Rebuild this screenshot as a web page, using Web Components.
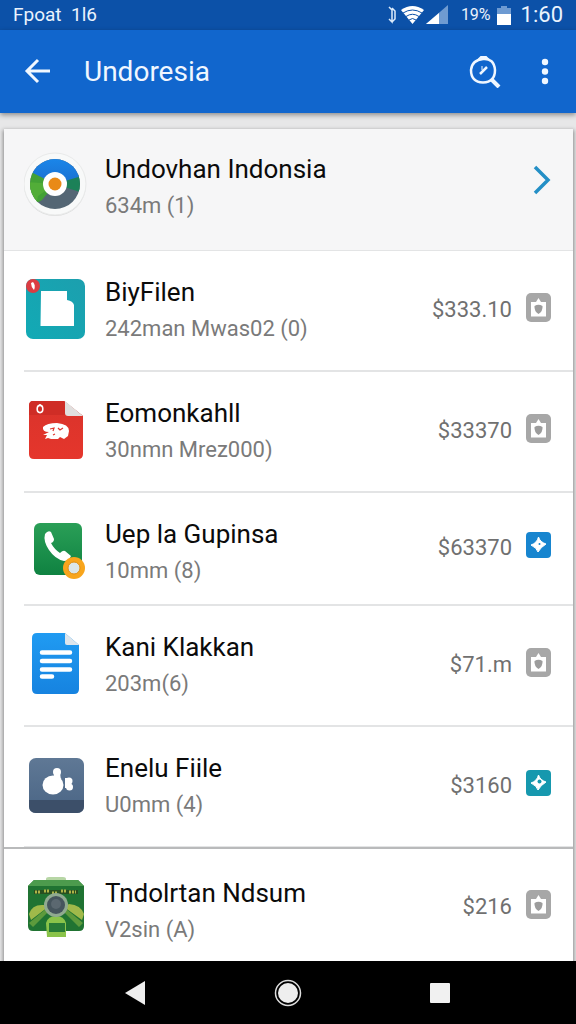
<!DOCTYPE html>
<html lang="id">
<head>
<meta charset="utf-8">
<meta name="viewport" content="width=device-width, initial-scale=1">
<title>Undoresia</title>
<style>
  body {
    margin: 0;
    font-family: Roboto, "Liberation Sans", sans-serif;
    --bar: #1166cd;
    --bar-dark: #0c51a8;
    --text-1: #0b0b0b;
    --text-2: #7a7a7a;
    --line: #e3e4e5;
  }
</style>
</head>
<body>

<phone-screen>
  <status-bar slot="top" carrier="Fpoat  1l6" battery="19%" time="1:60"></status-bar>
  <app-bar slot="top">Undoresia</app-bar>

  <file-row lead icon="ring" sub="634m (1)">Undovhan Indonsia</file-row>
  <file-row icon="folder" sub="242man Mwas02 (0)" price="$333.10" badge="bag">BiyFilen</file-row>
  <file-row icon="pdf" sub="30nmn Mrez000)" price="$33370" badge="bag">Eomonkahll</file-row>
  <file-row short icon="phone" sub="10mm (8)" price="$63370" badge="star">Uep la Gupinsa</file-row>
  <file-row icon="doc" sub="203m(6)" price="$71.m" badge="bag">Kani Klakkan</file-row>
  <file-row icon="thumb" sub="U0mm (4)" price="$3160" badge="star-teal">Enelu Fiile</file-row>
  <file-row split icon="camera" sub="V2sin (A)" price="$216" badge="bag">Tndolrtan Ndsum</file-row>

  <nav-bar slot="bottom"></nav-bar>
</phone-screen>

<script>
const APP_ICONS = {
  ring: `
    <defs>
      <clipPath id="c"><circle cx="31" cy="32" r="25"/></clipPath>
      <linearGradient id="b" x1="0" y1="0" x2="0" y2="1"><stop offset="0" stop-color="#1a8cf0"/><stop offset="1" stop-color="#1b6fd0"/></linearGradient>
    </defs>
    <circle cx="31" cy="33" r="31" fill="#dcdddd"/>
    <circle cx="31" cy="32" r="31" fill="#f8f9f9" stroke="#e9eaea"/>
    <g clip-path="url(#c)">
      <rect width="64" height="64" fill="#546674"/>
      <path d="M31 32L0 14V58L18 48Z" fill="#43a136"/>
      <path d="M31 32L14 44L12 54L2 46V30Z" fill="#52ad38"/>
      <path d="M31 32L62 20V42Z" fill="#1c8158"/>
      <path d="M31 32L7 20L20 0H50L58 24Z" fill="url(#b)"/>
    </g>
    <circle cx="31" cy="32" r="12" fill="#fff"/>
    <circle cx="31" cy="32" r="6.500" fill="#e98a17"/>`,
  folder: `
    <defs><linearGradient id="g" x1="1" y1="0" x2="0" y2="1"><stop offset="0" stop-color="#1c9fae"/><stop offset="1" stop-color="#12aab5"/></linearGradient></defs>
    <rect x="2" y="2" width="59" height="60" rx="7" fill="url(#g)"/>
    <path d="M17 14H43V23Q49 24 50 28V49H16.500Z" fill="#fff"/>
    <circle cx="9" cy="9" r="7" fill="#dc3c42"/>
    <path d="M9 5Q12 8 10 13Q7 10 7 6Z" fill="#fff"/>`,
  pdf: `
    <defs><linearGradient id="g" x1="0" y1="0" x2="0" y2="1"><stop offset="0" stop-color="#d9332b"/><stop offset="1" stop-color="#e5362c"/></linearGradient></defs>
    <path d="M9 3H40L59 18V56Q59 61 54 61H10Q5 61 5 56V8Q5 3 9 3Z" fill="url(#g)"/>
    <path d="M5 17H46L59 18L40 3H9Q5 3 5 8Z" fill="#cf2d26"/>
    <path d="M41 3L59 18H44Q41 18 41 15Z" fill="#e1dfde"/>
    <ellipse cx="16" cy="11" rx="2.800" ry="3.600" fill="none" stroke="#fff" stroke-width="1.600"/><path d="M16 6V8" stroke="#fff" stroke-width="1.500"/>
    <path d="M19 29Q23 25 33 25Q45 26 45 33L44 38L40 41L36 39L34 41H27L24 40L21 41L23 37H19L25 34Q18 34 19 29Z" fill="#fff"/>
    <path d="M26 31L30 30L29 33M34 30L36 32L39 30M29 37L31 36" fill="none" stroke="#de362e" stroke-width="1.200"/>`,
  phone: `
    <defs><linearGradient id="g" x1="0" y1="0" x2="0" y2="1"><stop offset="0" stop-color="#2a9f57"/><stop offset="1" stop-color="#0f8241"/></linearGradient></defs>
    <rect x="10" y="4" width="48" height="52" rx="6" fill="url(#g)"/>
    <path d="M21 15Q24 11 27 13L30 20Q30 23 27 24Q30 30 36 34Q39 31 41 32L47 37Q45 42 40 42Q31 40 25 31Q19 22 21 15Z" fill="#fff"/>
    <circle cx="50" cy="49" r="11" fill="#f8a51c"/>
    <circle cx="50" cy="49" r="6" fill="#dce6e8" stroke="#e08f14" stroke-width="1"/>`,
  doc: `
    <defs><linearGradient id="g" x1="0" y1="0" x2="0" y2="1"><stop offset="0" stop-color="#209bf2"/><stop offset="1" stop-color="#1683e0"/></linearGradient></defs>
    <path d="M13 1H41L55 13V57Q55 62 50 62H13Q8 62 8 57V6Q8 1 13 1Z" fill="url(#g)"/>
    <path d="M41 1L55 13H43Q41 13 41 11Z" fill="#dde5ec"/>
    <path d="M18 20.500H46M18 29H46M18 37.500H46M18 44.500H28" stroke="#fff" stroke-width="4.500" stroke-linecap="round"/>`,
  thumb: `
    <defs><linearGradient id="g" x1="0" y1="0" x2="0" y2="1"><stop offset="0" stop-color="#5f7895"/><stop offset="1" stop-color="#4a6585"/></linearGradient></defs>
    <rect x="5" y="5" width="55" height="55" rx="7" fill="url(#g)"/>
    <path d="M5 47H60V53Q60 60 53 60H12Q5 60 5 53Z" fill="#3c4f69"/>
    <ellipse cx="29" cy="32" rx="10.500" ry="9.500" fill="#fff"/>
    <circle cx="33" cy="19" r="4" fill="#fff"/><path d="M31 20H36L37 27H28Z" fill="#fff"/>
    <circle cx="45" cy="28" r="3.500" fill="#fff"/><circle cx="45.500" cy="34" r="3.500" fill="#fff"/>
    <path d="M41 25H44V35H41Z" fill="#fff"/>`,
  camera: `
    <path d="M22 6V3Q22 1 25 1H39Q42 1 42 3V6Z" fill="#b7d6a5"/>
    <path d="M10 4H54L60 10V50Q60 55 55 55H9Q4 55 4 50V10Z" fill="#207332"/>
    <path d="M10 4H54L60 10H4Z" fill="#4c9b4d"/>
    <path d="M10 14H54V18H10Z" fill="#284f20"/>
    <path d="M11 16H17M20 15H25M28 17H34M37 15H42M45 16H52" stroke="#aeb448" stroke-width="3" stroke-dasharray="2 1"/>
    <path d="M24 31L7 44L5 38Q8 28 20 29ZM40 31L58 44L60 38Q57 29 45 28Z" fill="#a0b94a"/>
    <path d="M24 36L9 51L5 47L23 32ZM40 36L55 51L59 47L41 32Z" fill="#5d9a3c"/>
    <path d="M22 47Q24 40 32 40T42 47V61H23Z" fill="#8ac34a"/>
    <path d="M25 47H41V56H25Z" fill="#277a36"/>
    <circle cx="32" cy="29" r="12" fill="#90aa90"/>
    <circle cx="32" cy="29" r="9" fill="#46555d"/>
    <circle cx="32" cy="28" r="5" fill="#5b6870"/>`
};

const BADGES = {
  bag: `
    <rect y="0" width="25" height="29" rx="5" fill="#a7a7a7"/>
    <path d="M5 9H10L12.500 5L15 9H20V23.500H5Z" fill="#fff"/>
    <path d="M8.500 13Q12.500 10.500 16.500 13Q17 18 12.500 21Q8 18 8.500 13Z" fill="#9c9c9c"/>`,
  star: `
    <rect y="1" width="25" height="26" rx="4" fill="#1785cf"/>
    <path d="M12.500 6Q14 11 20 13Q15 16 12 21Q11 17 5 14Q11 12 12.500 6Z" fill="#fff" stroke="#fff"/>
    <circle cx="13.500" cy="13" r="1" fill="#1785cf"/>`,
  'star-teal': `
    <rect y="1" width="25" height="26" rx="4" fill="#1698ae"/>
    <path d="M12.500 6Q14 11 20 13Q15 16 12 21Q11 17 5 14Q11 12 12.500 6Z" fill="#fff" stroke="#fff"/>
    <circle cx="13.500" cy="12.500" r="2" fill="#1698ae"/>`
};

class PhoneScreen extends HTMLElement {
  constructor() {
    super();
    this.attachShadow({ mode: "open" });
    this.shadowRoot.innerHTML = `
      <style>
        :host {
          display: flex;
          flex-direction: column;
          height: 100vh;
          background: #e7e7e8;
        }
        main {
          flex: 1;
          min-height: 0;
          overflow: hidden;
          padding: 16px 3px 0 4px;
        }
        .card {
          min-height: 100%;
          background: #fff;
          box-shadow: 0 2px 4px 1px rgb(0 0 0 / 0.4);
        }
      </style>
      <slot name="top"></slot>
      <main><div class="card"><slot></slot></div></main>
      <slot name="bottom"></slot>
    `;
  }
}

class StatusBar extends HTMLElement {
  constructor() {
    super();
    this.attachShadow({ mode: "open" });
  }

  connectedCallback() {
    this.shadowRoot.innerHTML = `
      <style>
        :host {
          display: flex;
          align-items: center;
          height: 30px;
          padding: 0 13px;
          background: var(--bar-dark);
          color: #eaf3fd;
          font-size: 19px;
          line-height: 28px;
          white-space: pre;
        }
        .carrier { flex: 1; }
        .battery { font-size: 16px; margin: 0 6px 0 12px; }
        .time { margin-left: 10px; font-size: 22px; }
        svg { display: block; }
      </style>
      <span class="carrier">${this.getAttribute("carrier")}</span>
      <svg width="62" height="20" viewBox="0 0 62 20" fill="#fff" aria-hidden="true">
        <path d="M2 2L5 5V17L2 14M5 3L8 6V14L5 17" fill="none" stroke="#dcebfb" stroke-width="1.500"/>
        <path d="M14 5Q25.500 -3 37 5L25.500 19Z"/>
        <path d="M16 8Q25.500 2 35 8M19 11.500Q25.500 7 32 11.500M22 15Q25.500 12 29 15" fill="none" stroke="#0c51a8" stroke-width="1"/>
        <path d="M39 19L61 0V19Z" fill="#6f9bd1"/>
        <path d="M39 19L52 8V19Z"/>
      </svg>
      <span class="battery">${this.getAttribute("battery")}</span>
      <svg width="14" height="20" viewBox="0 0 14 20" aria-hidden="true">
        <path d="M4 1H10V3H14V10H0V3H4Z" fill="#6d9ad2"/>
        <path d="M0 9H14V20H0Z" fill="#fff"/>
      </svg>
      <span class="time">${this.getAttribute("time")}</span>
    `;
  }
}

class AppBar extends HTMLElement {
  constructor() {
    super();
    this.attachShadow({ mode: "open" });
    this.shadowRoot.innerHTML = `
      <style>
        :host {
          display: flex;
          align-items: center;
          height: 83px;
          padding: 0 7px 0 14px;
          box-sizing: border-box;
          background: var(--bar);
          color: #f0f7ff;
          box-shadow: 0 2px 5px rgb(0 0 0 / 0.4);
          position: relative;
        }
        h1 {
          flex: 1;
          margin: 0 0 0 22px;
          font-size: 28px;
          font-weight: 400;
          line-height: 36px;
        }
        button {
          width: 48px;
          height: 48px;
          padding: 0;
          border: 0;
          background: none;
          color: inherit;
        }
        .search { margin-right: 12px; }
        svg { display: block; margin: auto; fill: none; stroke: currentColor; }
      </style>
      <button aria-label="Back">
        <svg width="28" height="28" viewBox="0 0 28 28" stroke-width="3"><path d="M26 13H3M14 2L3 13L14 24"/></svg>
      </button>
      <h1><slot></slot></h1>
      <button class="search" aria-label="Search">
        <svg width="32" height="32" viewBox="0 0 32 32" stroke-width="2.500">
          <path d="M14 3Q25 2 26 14Q26 26 14 26.500Q2 26 2 14Q3 4 14 3Z"/>
          <path d="M8 5L12 1H17L20 4" stroke-width="2"/>
          <path d="M22 23L30 31" stroke-width="4"/>
          <path d="M11 18L18 11" stroke-width="2.500"/><path d="M13 10V14" stroke-width="1"/>
        </svg>
      </button>
      <button aria-label="More">
        <svg width="8" height="28" viewBox="0 0 8 28">
          <g fill="currentColor" stroke="none"><circle cx="4" cy="4" r="3.200"/><circle cx="4" cy="13.500" r="3.200"/><circle cx="4" cy="23" r="3.200"/></g>
        </svg>
      </button>
    `;
  }
}

class FileRow extends HTMLElement {
  constructor() {
    super();
    this.attachShadow({ mode: "open" });

    this.css = `
      :host {
        display: flex;
        align-items: center;
        padding: 23px 21px 24px 20px;
        gap: 17px;
        background: linear-gradient(var(--line), var(--line)) 20px 100% / 100% 2px no-repeat;
      }
      :host([short]) { padding-bottom: 16px; }
      :host([lead]) {
        padding-top: 22px;
        padding-bottom: 26px;
        background: #f6f6f7;
        box-shadow: inset 0 -1px var(--line);
      }
      :host([split]) {
        padding-top: 26px;
        background: none;
        border-top: 2px solid #b9babb;
        margin-top: -1px;
      }
      .icon {
        flex: none;
        display: block;
        margin-bottom: 4px;
      }
      .body { flex: 1; min-width: 0; white-space: nowrap; }
      .title {
        margin: 0;
        font-size: 26px;
        font-weight: 400;
        line-height: 36px;
        color: var(--text-1);
      }
      .sub {
        margin: 0;
        font-size: 22px;
        line-height: 38px;
        color: var(--text-2);
      }
      .end {
        display: flex;
        align-items: center;
        gap: 14px;
        margin-bottom: 4px;
      }
      :host([lead]) .icon, :host([split]) .icon { margin-bottom: 8px; }
      :host([lead]) .end, :host([short]) .end, :host([split]) .end { margin-bottom: 12px; }
      .price { font-size: 22px; color: #707070; }
      .badge { display: block; margin-bottom: 4px; }
      a { display: block; }
    `;
  }

  connectedCallback() {
    this.render();
  }

  render() {
    const price = this.getAttribute("price");
    const end = this.hasAttribute("lead") ? `
      <a href="#" aria-label="Open">
        <svg width="20" height="30" viewBox="0 0 20 30" fill="none" stroke="#248fc6" stroke-width="3.500"><path d="M3 2L16 15L3 28"/></svg>
      </a>` : `
      <span class="price">${price}</span>
      <svg class="badge" width="26" height="29" viewBox="0 0 26 29">${BADGES[this.getAttribute("badge")]}</svg>`;

    this.shadowRoot.innerHTML = `
      <style>${this.css}</style>
      <svg class="icon" width="64" height="64" viewBox="0 0 64 64">${APP_ICONS[this.getAttribute("icon")]}</svg>
      <div class="body">
        <h2 class="title"><slot></slot></h2>
        <p class="sub">${this.getAttribute("sub")}</p>
      </div>
      <div class="end">${end}</div>
    `;
  }
}

class NavBar extends HTMLElement {
  constructor() {
    super();
    this.attachShadow({ mode: "open" });
    this.shadowRoot.innerHTML = `
      <style>
        :host {
          display: flex;
          justify-content: center;
          align-items: center;
          gap: 104px;
          height: 63px;
          background: #000;
          position: relative;
        }
        button { width: 48px; height: 48px; padding: 0; border: 0; background: none; }
        svg { display: block; margin: auto; }
      </style>
      <button aria-label="Back"><svg width="28" height="28" viewBox="0 0 28 28"><path d="M3 14L23 2V26Z" fill="#eee"/></svg></button>
      <button aria-label="Home"><svg width="28" height="28" viewBox="0 0 28 28"><circle cx="14" cy="14" r="12.500" fill="none" stroke="#ddd" stroke-width="1.500"/><circle cx="14" cy="14" r="10" fill="#eee"/></svg></button>
      <button aria-label="Recent"><svg width="28" height="28" viewBox="0 0 28 28"><rect x="4" y="4" width="20" height="20" rx="1" fill="#f1f1f1"/></svg></button>
    `;
  }
}

customElements.define("phone-screen", PhoneScreen);
customElements.define("status-bar", StatusBar);
customElements.define("app-bar", AppBar);
customElements.define("file-row", FileRow);
customElements.define("nav-bar", NavBar);
</script>
</body>
</html>
